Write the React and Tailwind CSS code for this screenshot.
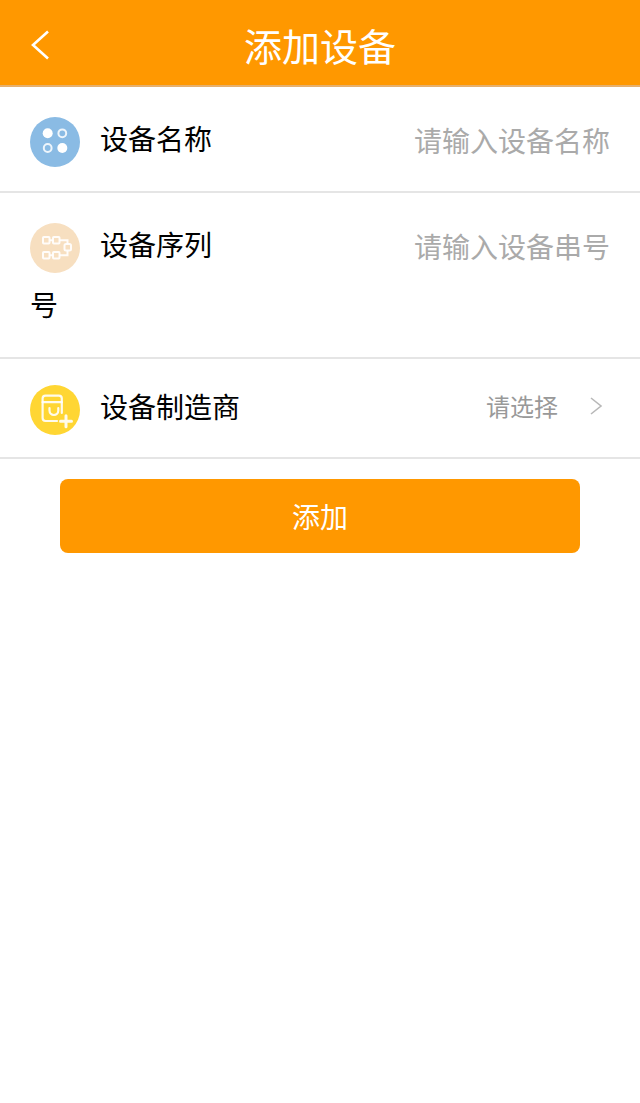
const cjk = { fontFamily: '"Noto Sans CJK SC", "Noto Sans", sans-serif' }

const NameIcon = () => (
  <svg viewBox="0 0 50 50" className="w-[50px] h-[50px]">
    <circle cx="25" cy="25" r="25" fill="#8abbe4" />
    <circle cx="17.7" cy="16.3" r="5" fill="#fff" />
    <circle cx="32.3" cy="16.3" r="3.9" fill="none" stroke="#fff" strokeWidth="2" strokeOpacity="0.85" />
    <circle cx="17.7" cy="31" r="3.9" fill="none" stroke="#fff" strokeWidth="2" strokeOpacity="0.85" />
    <circle cx="32.3" cy="31" r="5" fill="#fff" />
  </svg>
)

const SerialIcon = () => (
  <svg viewBox="0 0 50 50" className="w-[50px] h-[50px]">
    <circle cx="25" cy="25" r="25" fill="#f7dfc0" />
    <g fill="none" stroke="#fff" strokeWidth="2" strokeOpacity="0.9">
      <rect x="13" y="14" width="6.5" height="6.5" rx="0.8" />
      <rect x="23" y="14" width="6.5" height="6.5" rx="0.8" />
      <rect x="13" y="29" width="6.5" height="6.5" rx="0.8" />
      <rect x="23" y="29" width="6.5" height="6.5" rx="0.8" />
      <rect x="34.5" y="21" width="6.5" height="6.5" rx="1.5" />
      <path d="M19.5 17.2h3.5M19.5 32.2h3.5M29.5 17.2h8v3.8M29.5 32.2h8v-4.7" />
    </g>
  </svg>
)

const MakerIcon = () => (
  <svg viewBox="0 0 50 50" className="w-[50px] h-[50px]">
    <circle cx="25" cy="25" r="25" fill="#ffd633" />
    <g fill="none" stroke="#fff" strokeWidth="2.2" strokeOpacity="0.9" strokeLinecap="round" strokeLinejoin="round">
      <path d="M27 36h-11.5a2.9 2.9 0 0 1-2.9-2.9V13.5a2.9 2.9 0 0 1 2.9-2.9h13.4a2.9 2.9 0 0 1 2.9 2.9v14.5" />
      <path d="M12.6 17.2h19.2" />
      <path d="M19.5 23v2.6a4.4 4.4 0 0 0 8.8 0V23" />
      <path d="M30.5 36.3h11M36 30.8v11" strokeWidth="3" />
    </g>
  </svg>
)

const Row = ({ icon, className, children, right }) => (
  <div className={`flex justify-between px-[30px] border-b-2 border-[#e5e5e5] ${className}`}>
    <div className="-mt-px mb-px text-[28px] leading-[60px] text-black">
      <div className="float-left mt-[9px] mr-5">{icon}</div>
      {children}
    </div>
    {right}
  </div>
)

const NameInput = ({ placeholder }) => (
  <input
    readOnly
    placeholder={placeholder}
    className="w-[200px] h-[60px] mt-px -mb-px text-right text-[28px] outline-none placeholder:text-[#aaaaaa]"
    style={cjk}
  />
)

export default function App() {
  return (
    <div className="min-h-[1103px] bg-white" style={cjk}>
      <header className="grid grid-cols-[1fr_auto_1fr] items-center h-[87px] pt-1 bg-[#ff9800] border-b-2 border-[#e6b06e] text-white">
        <button className="pl-[30px] -mb-px text-left">
          <svg width="20" height="32" viewBox="0 0 20 32" fill="none" stroke="#fff" strokeWidth="2.6">
            <path d="M18 2.5 3 16l15 13.5" />
          </svg>
        </button>
        <h1 className="text-[38px] leading-none">添加设备</h1>
        <div />
      </header>

      <Row icon={<NameIcon />} className="py-[22px]" right={<NameInput placeholder="请输入设备名称" />}>
        设备名称
      </Row>

      <Row icon={<SerialIcon />} className="py-[22px]" right={<NameInput placeholder="请输入设备串号" />}>
        设备序列
        <br />号
      </Row>

      <Row
        icon={<MakerIcon />}
        className="pt-[18px] pb-[20px]"
        right={
          <div className="flex items-center h-[60px] -mt-px gap-[31px] text-[24px] text-[#999999]">
            <span>请选择</span>
            <svg width="14" height="20" viewBox="0 0 14 20" fill="none" stroke="#b8b8b8" strokeWidth="1.6" className="mr-[7px]">
              <path d="M2 2l10 8-10 8" />
            </svg>
          </div>
        }
      >
        设备制造商
      </Row>

      <div className="px-[60px] pt-[20px]">
        <button className="w-full h-[74px] rounded-lg bg-[#ff9800] text-white text-[28px]">添加</button>
      </div>
    </div>
  )
}
